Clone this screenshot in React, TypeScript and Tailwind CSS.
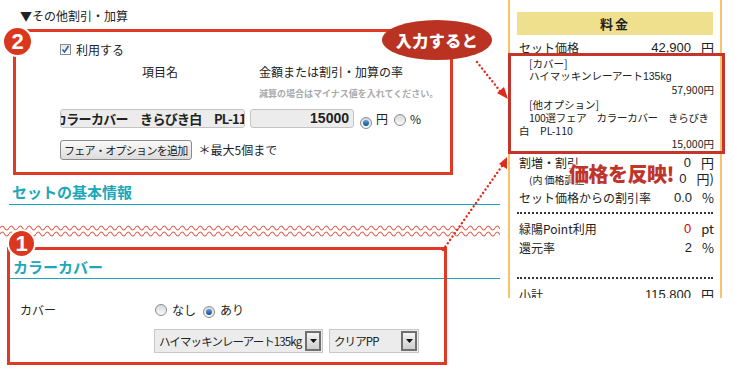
import React from 'react';

const RED = 'border-[#e03a26]';

function Radio({ checked }: { checked?: boolean }) {
  return (
    <span className="relative inline-flex h-[12px] w-[12px] shrink-0 items-center justify-center rounded-full border border-[#8c8c8c] bg-gradient-to-b from-[#d8d8d8] to-[#fafafa]">
      {checked && (
        <span className="h-[6px] w-[6px] rounded-full bg-gradient-to-b from-[#5aa0e0] to-[#0d4f9a]" />
      )}
    </span>
  );
}

function Select({ label, width }: { label: string; width: string }) {
  return (
    <div className={`flex h-[24px] shrink-0 items-center border border-[#c8c8c8] bg-[#ececec] pr-[1px] ${width}`}>
      <span className="min-w-0 flex-1 overflow-hidden whitespace-nowrap pl-[4px] text-[11.5px] leading-[16px] tracking-[-0.9px] text-[#222]">{label}</span>
      <span className="flex h-[20px] w-[16px] shrink-0 items-center justify-center border-2 border-[#707070] bg-gradient-to-b from-[#f4f4f4] to-[#cfcfcf]">
        <svg width="7" height="4" viewBox="0 0 7 4"><path d="M0 0h7L3.5 4z" fill="#111" /></svg>
      </span>
    </div>
  );
}

function Heading({ text, className }: { text: string; className: string }) {
  return (
    <div className={`border-b border-[#1ca8b8] ${className}`}>
      <span className="block pl-[3px] text-[15px] font-bold leading-[16px] text-[#1ca8b8]">{text}</span>
    </div>
  );
}

function Row({ label, value, unit, valueClass = '', className = '' }: { label: React.ReactNode; value: string; unit: string; valueClass?: string; className?: string }) {
  return (
    <div className={`flex h-[16px] items-center pl-[9px] pr-[6px] text-[12px] leading-[16px] ${className}`}>
      <span className="flex-1 whitespace-nowrap">{label}</span>
      <span className={`font-['Liberation_Sans',sans-serif] text-[13px] ${valueClass}`}>{value}</span>
      <span className="ml-[10px] min-w-[12px] text-[13px]">{unit}</span>
    </div>
  );
}

function Dots({ className }: { className: string }) {
  return <div className={`ml-[7px] mr-[7px] border-t-2 border-dotted border-[#333] ${className}`} />;
}

function Badge({ n, className }: { n: string; className: string }) {
  return (
    <div className={`absolute flex items-center justify-center rounded-full border-2 border-white bg-[#d9381e] font-['Liberation_Sans',sans-serif] text-[22px] font-black leading-none text-white ${className}`}>
      {n}
    </div>
  );
}

export default function App() {
  return (
    <div className="relative flex h-[370px] w-[734px] overflow-hidden bg-white font-['Noto_Sans_CJK_JP',sans-serif] text-[#222]">
      {/* left: form */}
      <div className="w-[500px] shrink-0">
        <p className="pl-[20px] pt-[9px] text-[12px] leading-[14px]">▼その他割引・加算</p>
        <div className="pl-[60px]">
          <label className="mt-[20px] flex h-[13px] items-center gap-[5px] text-[12px] leading-[13px]">
            <span className="flex h-[11px] w-[11px] items-center justify-center border border-[#8c8c8c] bg-gradient-to-b from-[#e4e4e4] to-white">
              <svg width="9" height="9" viewBox="0 0 9 9"><path d="M1.5 4.5l2 2.5 4-6" fill="none" stroke="#2b5fb0" strokeWidth="1.6" /></svg>
            </span>
            利用する
          </label>
          <div className="mt-[9px] flex h-[14px] text-[12px] leading-[14px]">
            <span className="w-[199px] pl-[82px]">項目名</span>
            <span>金額または割引・加算の率</span>
          </div>
          <p className="mt-[9px] h-[11px] pl-[199px] text-[9px] font-bold leading-[11px] text-[#aaa]">減算の場合はマイナス値を入れてください。</p>
          <div className="mt-[10px] flex h-[19px] items-center">
            <div className="h-[19px] w-[185px] overflow-hidden whitespace-nowrap rounded-[3px] border border-[#c4c4c4] bg-[#ececec] text-[13px] font-bold leading-[17px] tracking-[-0.7px]">
              <span className="-ml-[7px] inline-block">カラーカバー　きらびき白　PL-110</span>
            </div>
            <div className="ml-[5px] h-[19px] w-[104px] rounded-[3px] border border-[#c4c4c4] bg-[#ececec] pr-[4px] text-right font-['Liberation_Sans',sans-serif] text-[14px] font-bold leading-[17px]">
              15000
            </div>
            <span className="ml-[6px]"><Radio checked /></span>
            <span className="ml-[4px] text-[12px]">円</span>
            <span className="ml-[6px]"><Radio /></span>
            <span className="ml-[4px] text-[12px]">%</span>
          </div>
          <div className="mt-[12px] flex h-[20px] items-center">
            <button className="h-[20px] rounded-[3px] border border-[#8a8a8a] bg-gradient-to-b from-[#fafafa] to-[#dcdcdc] px-[3px] text-[11px] leading-[16px] tracking-[-0.7px]">
              フェア・オプションを追加
            </button>
            <span className="ml-[7px] text-[12px] leading-[14px]">＊最大5個まで</span>
          </div>
        </div>

        <Heading text="セットの基本情報" className="ml-[9px] mt-[24px] h-[21px]" />

        <svg className="mt-[19px] block" width="500" height="14" viewBox="0 0 500 14">
          <defs>
            <pattern id="wave" width="9" height="14" patternUnits="userSpaceOnUse">
              <path d="M0 4 Q2.25 0 4.5 4 T9 4 M0 10 Q2.25 6 4.5 10 T9 10" fill="none" stroke="#e06252" strokeWidth="1.1" />
            </pattern>
          </defs>
          <rect width="500" height="14" fill="url(#wave)" />
        </svg>

        <Heading text="カラーカバー" className="ml-[10px] mt-[21px] h-[20px]" />

        <div className="mt-[23px] flex h-[16px] items-center text-[12px] leading-[16px]">
          <span className="w-[155px] pl-[20px]">カバー</span>
          <Radio />
          <span className="ml-[5px]">なし</span>
          <span className="ml-[7px]"><Radio checked /></span>
          <span className="ml-[5px]">あり</span>
        </div>
        <div className="mt-[11px] flex gap-[6px] pl-[154px]">
          <Select label="ハイマッキンレーアート135kg" width="w-[169px]" />
          <Select label="クリアPP" width="w-[90px]" />
        </div>
      </div>

      {/* right: price panel */}
      <div className="ml-[8px] h-[298px] w-[214px] shrink-0 overflow-hidden border-x-2 border-[#f5c46a]">
        <div className="mx-[7px] mt-[12px] flex h-[23px] items-center justify-center bg-[#efe08e] text-[13px] font-bold tracking-[2px]">料金</div>
        <Row label="セット価格" value="42,900" unit="円" className="mt-[5px] h-[15px]" />
        <div className="pl-[9px] pr-[6px] pt-[1px] text-[10.5px] leading-[13px]">
          <p className="pl-[10px]">[カバー]</p>
          <p className="pl-[10px] font-['Liberation_Sans','Noto_Sans_CJK_JP',sans-serif]">ハイマッキンレーアート135kg</p>
          <p className="text-right">57,900円</p>
          <p className="mt-[2px] pl-[10px]">[他オプション]</p>
          <p className="pl-[10px] whitespace-nowrap tracking-[-0.3px]">100選フェア　カラーカバー　きらびき</p>
          <p>白　PL-110</p>
          <p className="text-right">15,000円</p>
        </div>
        <Row label="割増・割引" value="0" unit="円" className="mt-[5px]" />
        <Row label={<span className="pl-[10px] text-[10px]">(内 価格調整</span>} value="0" unit="円)" />
        <Row label="セット価格からの割引率" value="0.0" unit="%" className="mt-[3px]" />
        <Dots className="mt-[6px]" />
        <Row label="緑陽Point利用" value="0" unit="pt" valueClass="text-[#e00000]" className="mt-[7px]" />
        <Row label="還元率" value="2" unit="%" className="mt-[3px]" />
        <Dots className="mt-[21px]" />
        <Row label="小計" value="115,800" unit="円" className="mt-[8px]" />
      </div>

      {/* annotations */}
      <div className="pointer-events-none absolute inset-0">
        <div className={`absolute left-[13px] top-[29px] h-[146px] w-[440px] border-[3px] ${RED}`} />
        <div className={`absolute left-[7px] top-[247px] h-[118px] w-[440px] border-[3px] ${RED}`} />
        <div className="absolute left-[508px] top-[53px] h-[101px] w-[217px] border-[3px] border-[#c4362b]" />
        <Badge n="2" className="left-[2px] top-[26px] h-[31px] w-[31px]" />
        <Badge n="1" className="left-[7px] top-[229px] h-[29px] w-[29px]" />

        <div className="absolute left-[382px] top-[20px] flex h-[40px] w-[110px] items-center justify-center rounded-[50%] bg-[#b93222] text-[16px] font-black tracking-[0.5px] text-white">
          入力すると
        </div>

        <svg className="absolute inset-0" width="734" height="370">
          <g stroke="#e02a1a" strokeWidth="2.4" strokeDasharray="0.1 4" strokeLinecap="round" fill="none">
            <path d="M477 62 L500 91" />
            <path d="M443 250 L502 166" />
          </g>
          <path d="M508 99 L497 93 L504 87 Z" fill="#e02a1a" />
          <path d="M507 157 L507 169 L499 164 Z" fill="#e02a1a" />
        </svg>

        <span className="absolute left-[569px] top-[162px] text-[20px] font-black leading-[24px] tracking-[-0.5px] text-[#c0352a] [text-shadow:0_0_2px_#fff,0_0_2px_#fff,0_0_2px_#fff]">
          価格を反映!
        </span>
      </div>
    </div>
  );
}
